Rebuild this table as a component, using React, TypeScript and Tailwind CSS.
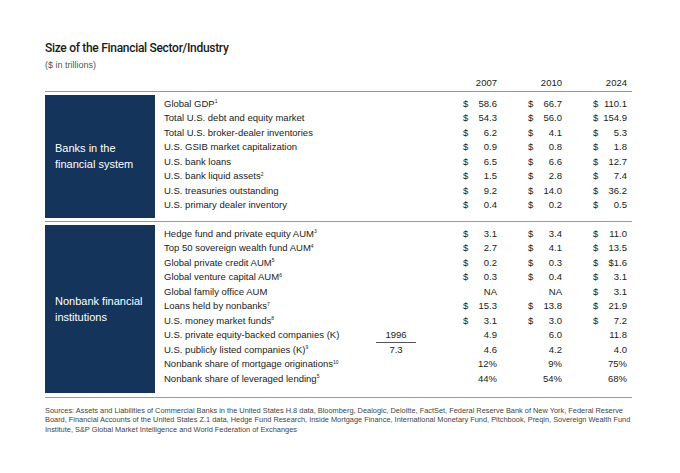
import React from 'react';

type Row = {
    label: string;
    sup?: string;
    extra?: React.ReactNode;
    extraLine?: boolean;
    v: [string, string, string];
    dollar?: [boolean, boolean, boolean];
};

const banks: Row[] = [
    { label: 'Global GDP', sup: '1', v: ['58.6', '66.7', '110.1'] },
    { label: 'Total U.S. debt and equity market', v: ['54.3', '56.0', '154.9'] },
    { label: 'Total U.S. broker-dealer inventories', v: ['6.2', '4.1', '5.3'] },
    { label: 'U.S. GSIB market capitalization', v: ['0.9', '0.8', '1.8'] },
    { label: 'U.S. bank loans', v: ['6.5', '6.6', '12.7'] },
    { label: 'U.S. bank liquid assets', sup: '2', v: ['1.5', '2.8', '7.4'] },
    { label: 'U.S. treasuries outstanding', v: ['9.2', '14.0', '36.2'] },
    { label: 'U.S. primary dealer inventory', v: ['0.4', '0.2', '0.5'] },
];

const nonbanks: Row[] = [
    { label: 'Hedge fund and private equity AUM', sup: '3', v: ['3.1', '3.4', '11.0'] },
    { label: 'Top 50 sovereign wealth fund AUM', sup: '4', v: ['2.7', '4.1', '13.5'] },
    { label: 'Global private credit AUM', sup: '5', v: ['0.2', '0.3', '$1.6'] },
    { label: 'Global venture capital AUM', sup: '6', v: ['0.3', '0.4', '3.1'] },
    { label: 'Global family office AUM', v: ['NA', 'NA', '3.1'], dollar: [false, false, true] },
    { label: 'Loans held by nonbanks', sup: '7', v: ['15.3', '13.8', '21.9'] },
    { label: 'U.S. money market funds', sup: '8', v: ['3.1', '3.0', '7.2'] },
    { label: 'U.S. private equity-backed companies (K)', extra: '1996', extraLine: true, v: ['4.9', '6.0', '11.8'], dollar: [false, false, false] },
    { label: 'U.S. publicly listed companies (K)', sup: '9', extra: '7.3', v: ['4.6', '4.2', '4.0'], dollar: [false, false, false] },
    { label: 'Nonbank share of mortgage originations', sup: '10', v: ['12%', '9%', '75%'], dollar: [false, false, false] },
    { label: 'Nonbank share of leveraged lending', sup: '5', v: ['44%', '54%', '68%'], dollar: [false, false, false] },
];

const Cell = ({ value, dollar }: { value: string; dollar: boolean }) => (
    <div className="w-[65px] flex justify-end">
        <div className="w-[34px] flex justify-between">
            <span>{dollar ? '$' : ''}</span>
            <span>{value}</span>
        </div>
    </div>
);

const DataRow = ({ row }: { row: Row }) => {
    const d = row.dollar ?? [true, true, true];
    return (
        <div className="flex items-center h-[14.5px] text-[9.5px] text-[#222]">
            <div className="flex-1 whitespace-nowrap">
                {row.label}
                {row.sup && <sup className="text-[5px] -top-[3.5px]">{row.sup}</sup>}
            </div>
            <div className="w-[40px] mr-[16px] h-full flex items-center justify-center">
                {row.extra && (
                    <span className={row.extraLine ? 'w-full h-full flex items-center justify-center border-b border-[#555]' : ''}>
                        {row.extra}
                    </span>
                )}
            </div>
            <Cell value={row.v[0]} dollar={d[0]} />
            <Cell value={row.v[1]} dollar={d[1]} />
            <Cell value={row.v[2]} dollar={d[2]} />
        </div>
    );
};

const Section = ({ title, rows, last }: { title: string[]; rows: Row[]; last?: boolean }) => (
    <div className={`border-t-[1.5px] border-[#9a9a9a] pt-[3px] flex ${last ? 'pb-[4px]' : 'pb-[3px]'}`}>
        <div className="w-[110px] bg-[#15345b] text-white text-[11px] leading-[16px] px-[10px] flex flex-col justify-center whitespace-nowrap">
            {title.map((t) => (
                <div key={t}>{t}</div>
            ))}
        </div>
        <div className={`flex-1 pl-[9px] pr-[5px] pt-[2px] ${last ? 'pb-[7px]' : 'pb-[5px]'}`}>
            {rows.map((r) => (
                <DataRow key={r.label} row={r} />
            ))}
        </div>
    </div>
);

export default function App() {
    return (
        <div className="w-[680px] h-[473px] bg-white px-[45px] pt-[40px]" style={{ fontFamily: '"Liberation Sans", Arial, sans-serif' }}>
            <h1 className="text-[12px] leading-[16px] font-medium text-[#1a1a1a] tracking-[-0.3px]" style={{ fontFamily: 'Roboto, "Liberation Sans", sans-serif' }}>
                Size of the Financial Sector/Industry
            </h1>
            <p className="mt-[3px] text-[9px] leading-[12px] text-[#555]">($ in trillions)</p>

            <div className="w-[587px] mt-[6px]">
                <div className="flex justify-end pr-[5px] pb-[1.5px] text-[9.5px] leading-[12px] text-[#222]">
                    <div className="w-[65px] text-right">2007</div>
                    <div className="w-[65px] text-right">2010</div>
                    <div className="w-[65px] text-right">2024</div>
                </div>
                <Section title={['Banks in the', 'financial system']} rows={banks} />
                <Section title={['Nonbank financial', 'institutions']} rows={nonbanks} last />
                <div className="border-t-[1.5px] border-[#9a9a9a] pt-[8px] text-[7.4px] leading-[9.3px] text-[#444]">
                    Sources: Assets and Liabilities of Commercial Banks in the United States H.8 data, Bloomberg, Dealogic, Deloitte, FactSet, Federal Reserve Bank of New York, Federal Reserve Board, Financial Accounts of the United States Z.1 data, Hedge Fund Research, Inside Mortgage Finance, International Monetary Fund, Pitchbook, Preqin, Sovereign Wealth Fund Institute, S&amp;P Global Market Intelligence and World Federation of Exchanges
                </div>
            </div>
        </div>
    );
}
